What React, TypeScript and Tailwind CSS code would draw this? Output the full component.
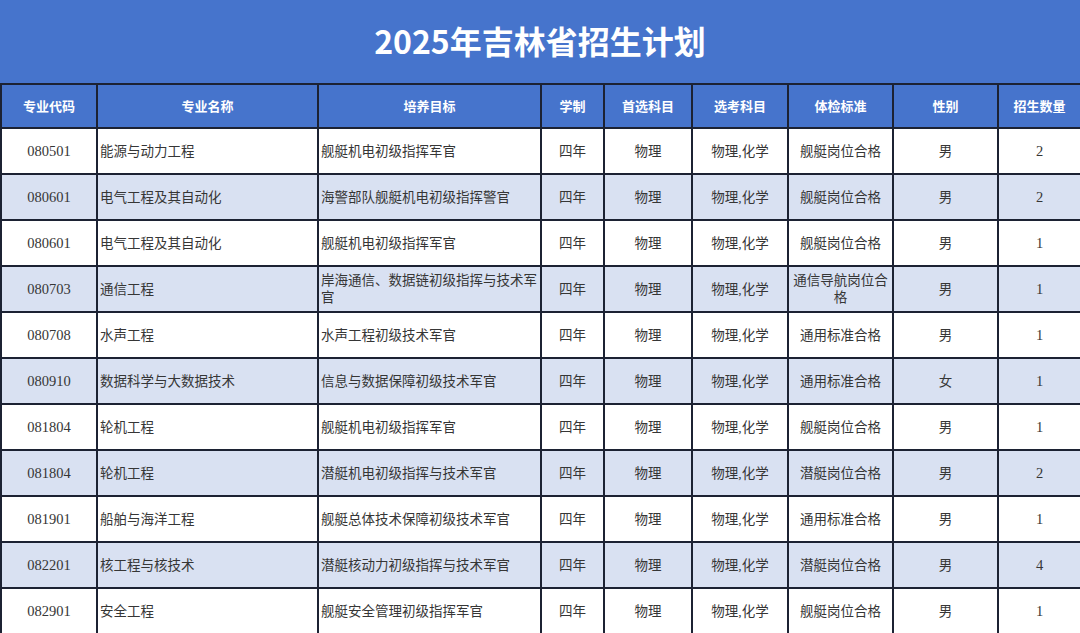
import React from "react";

const rows: string[][] = [
  ["080501", "能源与动力工程", "舰艇机电初级指挥军官", "四年", "物理", "物理,化学", "舰艇岗位合格", "男", "2"],
  ["080601", "电气工程及其自动化", "海警部队舰艇机电初级指挥警官", "四年", "物理", "物理,化学", "舰艇岗位合格", "男", "2"],
  ["080601", "电气工程及其自动化", "舰艇机电初级指挥军官", "四年", "物理", "物理,化学", "舰艇岗位合格", "男", "1"],
  ["080703", "通信工程", "岸海通信、数据链初级指挥与技术军官", "四年", "物理", "物理,化学", "通信导航岗位合格", "男", "1"],
  ["080708", "水声工程", "水声工程初级技术军官", "四年", "物理", "物理,化学", "通用标准合格", "男", "1"],
  ["080910", "数据科学与大数据技术", "信息与数据保障初级技术军官", "四年", "物理", "物理,化学", "通用标准合格", "女", "1"],
  ["081804", "轮机工程", "舰艇机电初级指挥军官", "四年", "物理", "物理,化学", "舰艇岗位合格", "男", "1"],
  ["081804", "轮机工程", "潜艇机电初级指挥与技术军官", "四年", "物理", "物理,化学", "潜艇岗位合格", "男", "2"],
  ["081901", "船舶与海洋工程", "舰艇总体技术保障初级技术军官", "四年", "物理", "物理,化学", "通用标准合格", "男", "1"],
  ["082201", "核工程与核技术", "潜艇核动力初级指挥与技术军官", "四年", "物理", "物理,化学", "潜艇岗位合格", "男", "4"],
  ["082901", "安全工程", "舰艇安全管理初级指挥军官", "四年", "物理", "物理,化学", "舰艇岗位合格", "男", "1"],
];

const headers = ["专业代码", "专业名称", "培养目标", "学制", "首选科目", "选考科目", "体检标准", "性别", "招生数量"];
const widths = [96, 221, 223, 63, 88, 96, 105, 105, 83];

export default function App() {
  return (
    <div className="w-[1080px] h-[633px] overflow-hidden bg-white">
      <div className="h-[83px] bg-[#4674cc] flex items-center justify-center">
        <h1
          className="text-white text-[32px] font-bold pb-[4px]"
          style={{ fontFamily: '"Noto Sans CJK SC", sans-serif' }}
        >
          2025年吉林省招生计划
        </h1>
      </div>
      <table className="table-fixed border-collapse w-[1080px]">
        <colgroup>
          {widths.map((w, i) => (
            <col key={i} style={{ width: w }} />
          ))}
        </colgroup>
        <thead>
          <tr className="h-[44px] bg-[#4674cc]">
            {headers.map((h, i) => (
              <th
                key={i}
                className="border-2 border-[#1c2233] text-white text-[13px] font-bold text-center p-0"
                style={{ fontFamily: '"Noto Sans CJK SC", sans-serif' }}
              >
                {h}
              </th>
            ))}
          </tr>
        </thead>
        <tbody>
          {rows.map((r, ri) => (
            <tr key={ri} className={`h-[46px] ${ri % 2 === 1 ? "bg-[#d9e1f2]" : "bg-white"}`}>
              {r.map((c, ci) => (
                <td
                  key={ci}
                  className={`border-2 border-[#1c2233] leading-[17px] text-[#363636] ${
                    ci === 0 || ci === 8 ? "text-[14.5px]" : "text-[13.5px]"
                  } ${ci === 1 || ci === 2 ? "text-left px-[2px]" : "text-center px-[2px]"}`}
                  style={{ fontFamily: '"Liberation Serif", "Noto Sans CJK SC", serif' }}
                >
                  {c}
                </td>
              ))}
            </tr>
          ))}
        </tbody>
      </table>
    </div>
  );
}
